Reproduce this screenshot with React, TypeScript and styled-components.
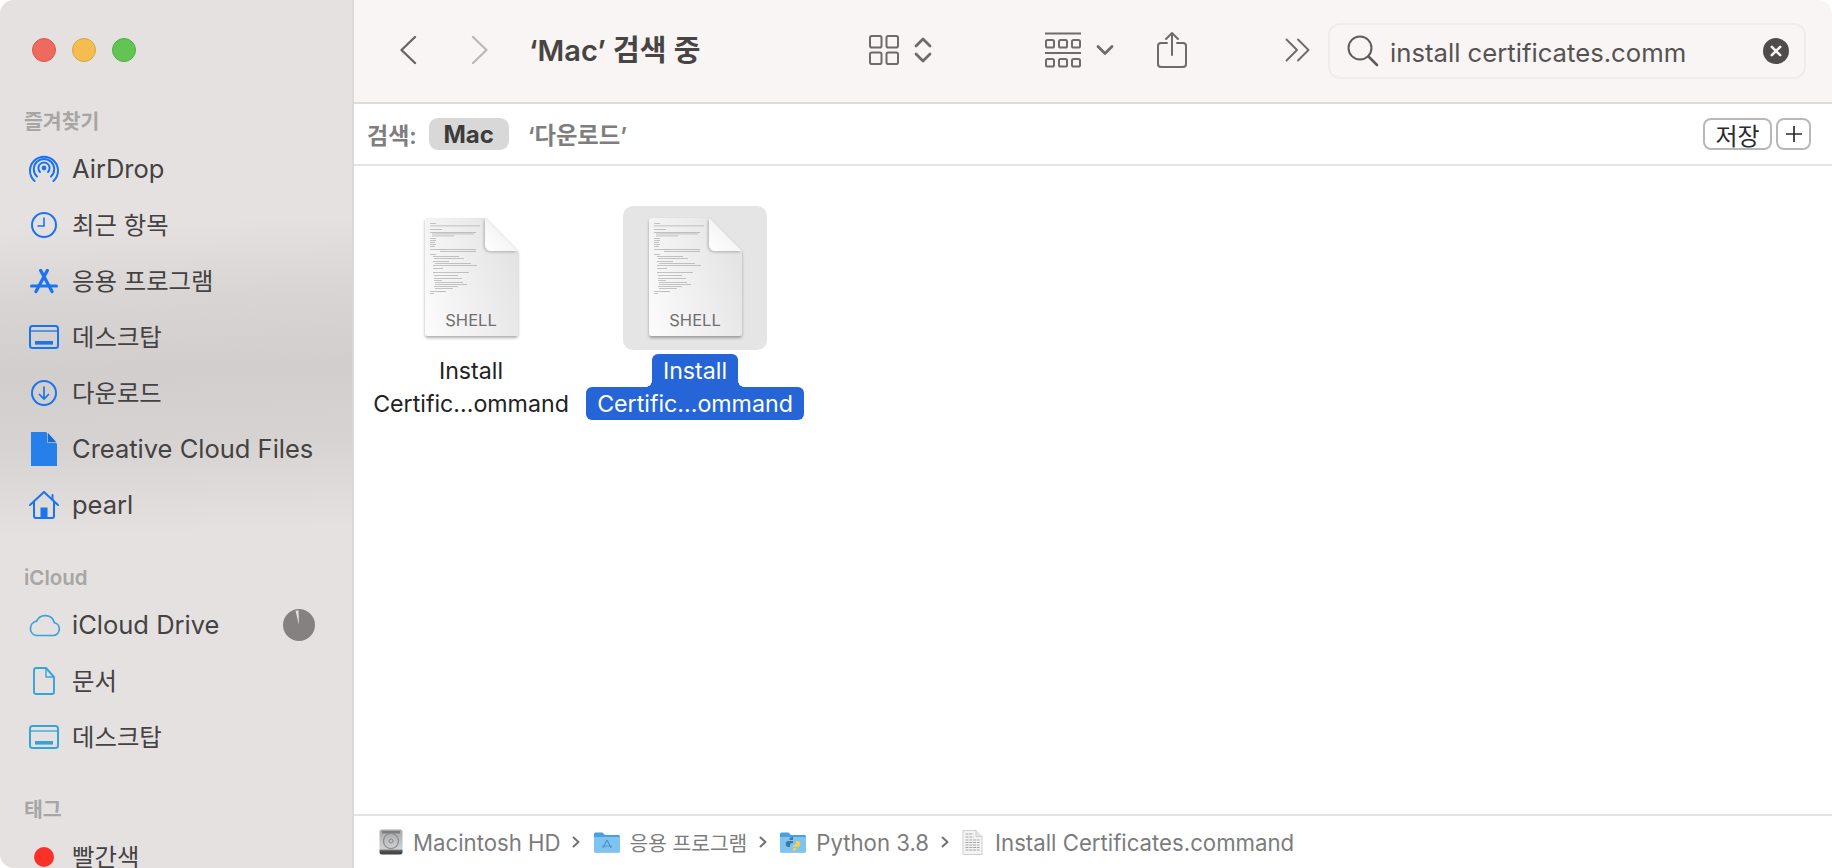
import React from 'react';
import styled, { createGlobalStyle } from 'styled-components';

const FONT = `Inter, "Noto Sans CJK KR", "Noto Sans", sans-serif`;

const Global = createGlobalStyle`
  html, body { margin: 0; padding: 0; height: 100%; background: #fff; overflow: hidden; }
  body { font-family: ${FONT}; -webkit-font-smoothing: antialiased; }
  #root { height: 100%; }
`;

const Window = styled.div`
  width: 1832px;
  height: 868px;
  display: flex;
  overflow: hidden;
  background: #fff;
  border-radius: 14px 14px 0 14px;
`;

const Sidebar = styled.aside`
  width: 352px;
  height: 868px;
  flex: none;
  overflow: hidden;
  border-right: 2px solid #dcd9d8;
  background: linear-gradient(178deg, #e5e1e0 0, #e5e1e0 228px, #d9d5d4 300px, #d2cecd 375px, #d7d3d2 450px, #e5e1e0 540px, #e5e1e0 100%);
`;

const Lights = styled.div`
  display: flex;
  gap: 16px;
  padding: 38px 0 0 32px;
  height: 27px;
`;

const Light = styled.span<{ $fill: string; $edge: string }>`
  width: 24px;
  height: 24px;
  box-sizing: border-box;
  border-radius: 50%;
  background: ${(p) => p.$fill};
  border: 1px solid ${(p) => p.$edge};
`;

const Section = styled.section`
  margin-top: 26px;
  &:first-of-type { margin-top: 38px; }
`;

const SectionTitle = styled.div`
  height: 38px;
  line-height: 38px;
  padding-left: 24px;
  font-size: 20.5px;
  font-weight: 600;
  color: #a8a5a4;
`;

const Row = styled.div`
  height: 56px;
  display: flex;
  align-items: center;
  padding-left: 26px;
  font-size: 25.5px;
  color: #444242;
`;

const RowIcon = styled.span`
  width: 36px;
  height: 36px;
  margin-right: 10px;
  display: flex;
  align-items: center;
  justify-content: center;
  flex: none;
`;

const RowLabel = styled.span<{ $ko?: boolean }>`
  white-space: nowrap;
  font-size: ${(p) => (p.$ko ? '24.4px' : 'inherit')};
  padding-bottom: ${(p) => (p.$ko ? '3px' : '2px')};
`;

const Progress = styled.span`
  margin-left: auto;
  margin-right: 37px;
  width: 32px;
  height: 32px;
  display: flex;
`;

const Main = styled.main`
  flex: 1;
  min-width: 0;
  display: flex;
  flex-direction: column;
`;

const Toolbar = styled.header`
  height: 104px;
  flex: none;
  box-sizing: border-box;
  background: #f9f5f4;
  border-bottom: 2px solid #dfdcdb;
  display: flex;
  align-items: center;
  padding-bottom: 2px;
`;

const ToolIcon = styled.span<{ $w: number; $l: number }>`
  width: ${(p) => p.$w}px;
  margin-left: ${(p) => p.$l}px;
  display: flex;
  flex: none;
  align-items: center;
  justify-content: center;
`;

const Title = styled.h1`
  margin: 0 0 4px 40px;
  width: 200px;
  flex: none;
  font-size: 29px;
  font-weight: 600;
  color: #474544;
  white-space: nowrap;
`;

const Search = styled.div`
  width: 478px;
  height: 56px;
  box-sizing: border-box;
  margin: 2px 0 0 18px;
  border: 2px solid #f0ecea;
  border-radius: 12px;
  display: flex;
  align-items: center;
  padding-left: 17px;
  flex: none;
`;

const SearchText = styled.span`
  margin-left: 11px;
  padding-top: 2px;
  font-size: 25.7px;
  color: #555352;
  white-space: nowrap;
`;

const Clear = styled.span`
  margin-left: auto;
  margin-right: 15px;
  display: flex;
`;

const FilterBar = styled.div`
  height: 62px;
  flex: none;
  box-sizing: border-box;
  border-bottom: 2px solid #e3e3e3;
  display: flex;
  align-items: center;
  padding: 0 21px 0 13px;
`;

const FilterLabel = styled.span`
  font-size: 23px;
  font-weight: 600;
  color: #7e7e7e;
`;

const Pill = styled.span`
  width: 80px;
  height: 32px;
  margin-left: 12px;
  border-radius: 9px;
  background: #d8d8d8;
  display: flex;
  align-items: center;
  justify-content: center;
  font-size: 24px;
  font-weight: 700;
  color: #3c3c3c;
`;

const Scope = styled.span`
  margin-left: 19px;
  font-size: 23.3px;
  font-weight: 600;
  color: #7e7e7e;
`;

const BarButton = styled.button<{ $w: number; $l: string }>`
  width: ${(p) => p.$w}px;
  height: 32px;
  margin-left: ${(p) => p.$l};
  padding: 0;
  box-sizing: border-box;
  background: #fff;
  border: 2px solid #b8b8b8;
  border-radius: 8px;
  display: flex;
  align-items: center;
  justify-content: center;
  font-family: ${FONT};
  font-size: 24px;
  color: #2b2b2b;
`;

const Files = styled.div`
  flex: 1;
  min-height: 0;
  padding: 40px 0 0 5px;
  display: grid;
  grid-template-columns: repeat(auto-fill, 224px);
  align-content: start;
`;

const FileItem = styled.div`
  display: flex;
  flex-direction: column;
  align-items: center;
`;

const Thumb = styled.div<{ $selected?: boolean }>`
  width: 144px;
  height: 144px;
  border-radius: 10px;
  background: ${(p) => (p.$selected ? '#e5e5e5' : 'transparent')};
  display: flex;
  align-items: center;
  justify-content: center;
`;

const FileName = styled.div`
  margin-top: 4px;
  display: flex;
  flex-direction: column;
  align-items: center;
  font-size: 23.2px;
  color: #222;
`;

const NameLine = styled.span<{ $selected?: boolean; $top?: boolean }>`
  position: relative;
  height: 33px;
  line-height: 35px;
  padding: 0 11px;
  white-space: nowrap;
  color: ${(p) => (p.$selected ? '#fff' : '#222')};
  background: ${(p) => (p.$selected ? '#2565d8' : 'transparent')};
  border-radius: ${(p) => (p.$top ? '6px 6px 0 0' : '6px')};
  ${(p) =>
    p.$top && p.$selected
      ? `
    &::before, &::after {
      content: '';
      position: absolute;
      bottom: 0;
      width: 6px;
      height: 6px;
    }
    &::before {
      left: -6px;
      background: radial-gradient(circle at 0 0, transparent 5.6px, #2565d8 6px);
    }
    &::after {
      right: -6px;
      background: radial-gradient(circle at 100% 0, transparent 5.6px, #2565d8 6px);
    }
  `
      : ''}
`;

const StatusBar = styled.footer`
  height: 54px;
  flex: none;
  box-sizing: border-box;
  border-top: 2px solid #e3e3e3;
  display: flex;
  align-items: center;
  padding-left: 25px;
  font-size: 22.2px;
  color: #7c7c7c;
`;

const Crumb = styled.span<{ $ko?: boolean }>`
  display: flex;
  align-items: center;
  gap: 10px;
  white-space: nowrap;
  font-size: ${(p) => (p.$ko ? '20.3px' : 'inherit')};
`;

const CrumbSep = styled.span`
  display: flex;
  margin: 0 13.5px 0 11.5px;
`;

const BLUE = '#1a73f0';
const CYAN = '#36a3d9';
const ICON = '#6f6b6a';

const AirDropIcon = () => (
  <svg width="30" height="28" viewBox="0 0 30 28" fill="none" stroke={BLUE} strokeWidth="2" strokeLinecap="round">
    <circle cx="15" cy="13" r="2.4" fill={BLUE} stroke="none" />
    <path d="M11 17a5.600 5.600 0 1 1 8 0" />
    <path d="M8 21.500a10.200 10.200 0 1 1 14 0" />
    <path d="M5.500 26a14 14 0 1 1 19 0" />
  </svg>
);
const ClockIcon = () => (
  <svg width="28" height="28" viewBox="0 0 28 28" fill="none" stroke={BLUE} strokeWidth="2">
    <circle cx="14" cy="14" r="12" />
    <path d="M14 6.500V15H7.500" strokeWidth="1.600" />
  </svg>
);
const AppsIcon = () => (
  <svg width="28" height="25" viewBox="0 0 28 25" fill="none" stroke={BLUE} strokeLinecap="round">
    <path d="M10.700 1.500L22 22.500M17.300 1.500L6 22.500" strokeWidth="3.300" />
    <path d="M1.500 17h25" strokeWidth="3" />
  </svg>
);
const DesktopIcon = ({ color }: { color: string }) => (
  <svg width="30" height="24" viewBox="0 0 30 24" fill="none">
    <rect x="1" y="1" width="28" height="22" rx="2.500" stroke={color} strokeWidth="2" />
    <path d="M1 6h28" stroke={color} strokeWidth="1.300" />
    <rect x="6" y="16" width="18" height="3.600" fill={color} />
  </svg>
);
const DownloadIcon = () => (
  <svg width="28" height="28" viewBox="0 0 28 28" fill="none" stroke={BLUE} strokeWidth="2">
    <circle cx="14" cy="14" r="12" />
    <path d="M14 7.500V19.500M9 15l5 5 5-5" strokeWidth="1.700" />
  </svg>
);
const CloudFileIcon = () => (
  <svg width="28" height="36" viewBox="0 0 28 36" fill="none">
    <path d="M1 1h15l11 12v22H1z" fill="#2680eb" />
    <path d="M17.500 1L27 11.500H17.500z" fill="#1b6bd0" stroke="#e0dcdb" strokeWidth="0.6" />
  </svg>
);
const HomeIcon = () => (
  <svg width="30" height="28" viewBox="0 0 30 28" fill="none" stroke={BLUE} strokeWidth="2" strokeLinejoin="round" strokeLinecap="round">
    <path d="M1 14L15 1l14 13" />
    <path d="M5 11v14a2 2 0 0 0 2 2h16a2 2 0 0 0 2-2V11" />
    <path d="M23.500 4v5" />
    <rect x="11.500" y="16.500" width="7" height="10.500" fill={BLUE} stroke="none" />
  </svg>
);
const CloudIcon = () => (
  <svg width="33" height="24" viewBox="0 0 33 24" fill="none" stroke={CYAN} strokeWidth="1.700">
    <path d="M8 22.500h17a6.500 6.500 0 0 0 1.400-12.800A9.500 9.500 0 0 0 8.600 8.200 7.300 7.300 0 0 0 8 22.500z" />
  </svg>
);
const DocOutlineIcon = () => (
  <svg width="22" height="28" viewBox="0 0 22 28" fill="none" stroke={CYAN} strokeWidth="1.900" strokeLinejoin="round">
    <path d="M3 1h10l8 9v15a2 2 0 0 1-2 2H3a2 2 0 0 1-2-2V3a2 2 0 0 1 2-2z" />
    <path d="M13 1v9h8" strokeWidth="1.400" />
  </svg>
);
const TagDot = () => (
  <svg width="20" height="20" viewBox="0 0 20 20">
    <circle cx="10" cy="10" r="10" fill="#fb3128" />
  </svg>
);
const ProgressPie = () => (
  <svg width="32" height="32" viewBox="0 0 32 32">
    <circle cx="16" cy="16" r="16" fill="#858180" />
    <path d="M16 16L12.500 1.800A15 15 0 0 1 15.500 1.200z" fill="#e5e1e0" />
  </svg>
);

const Chevron = ({ dir, color }: { dir: 'l' | 'r'; color: string }) => (
  <svg width="18" height="30" viewBox="0 0 18 30" fill="none" stroke={color} strokeWidth="2.400" strokeLinecap="round" strokeLinejoin="round">
    <path d={dir === 'l' ? 'M16 2L2.500 15 16 28' : 'M2 2l13.500 13L2 28'} />
  </svg>
);
const GridIcon = () => (
  <svg width="32" height="32" viewBox="0 0 32 32" fill="none" stroke={ICON} strokeWidth="2">
    <rect x="2" y="2" width="11.500" height="11.500" rx="1.800" />
    <rect x="18.500" y="2" width="11.500" height="11.500" rx="1.800" />
    <rect x="2" y="18.500" width="11.500" height="11.500" rx="1.800" />
    <rect x="18.500" y="18.500" width="11.500" height="11.500" rx="1.800" />
  </svg>
);
const UpDownIcon = () => (
  <svg width="18" height="28" viewBox="0 0 18 28" fill="none" stroke={ICON} strokeWidth="2.800" strokeLinecap="round" strokeLinejoin="round">
    <path d="M2 10l7-7 7 7M2 18l7 7 7-7" />
  </svg>
);
const GroupIcon = () => (
  <svg width="36" height="36" viewBox="0 0 36 36" fill="none" stroke={ICON} strokeWidth="2">
    <path d="M0 1.500h36M0 21h36" />
    <rect x="1" y="8" width="8" height="7.500" rx="1.600" />
    <rect x="14" y="8" width="8" height="7.500" rx="1.600" />
    <rect x="27" y="8" width="8" height="7.500" rx="1.600" />
    <rect x="1" y="27" width="8" height="7.500" rx="1.600" />
    <rect x="14" y="27" width="8" height="7.500" rx="1.600" />
    <rect x="27" y="27" width="8" height="7.500" rx="1.600" />
  </svg>
);
const DownIcon = () => (
  <svg width="18" height="12" viewBox="0 0 18 12" fill="none" stroke={ICON} strokeWidth="2.800" strokeLinecap="round" strokeLinejoin="round">
    <path d="M2 2.500l7 7 7-7" />
  </svg>
);
const ShareIcon = () => (
  <svg width="30" height="38" viewBox="0 0 30 38" fill="none" stroke={ICON} strokeWidth="2" strokeLinecap="round" strokeLinejoin="round">
    <path d="M10 12H4a3 3 0 0 0-3 3v18a3 3 0 0 0 3 3h22a3 3 0 0 0 3-3V15a3 3 0 0 0-3-3h-6" />
    <path d="M15 24V2M9 8l6-6 6 6" />
  </svg>
);
const MoreIcon = () => (
  <svg width="25" height="24" viewBox="0 0 25 24" fill="none" stroke={ICON} strokeWidth="1.900" strokeLinecap="round" strokeLinejoin="round">
    <path d="M1.500 1.500L12 12 1.500 22.500M13 1.500L23.500 12 13 22.500" />
  </svg>
);
const SearchIcon = () => (
  <svg width="32" height="32" viewBox="0 0 32 32" fill="none" stroke="#5e5b5a" strokeWidth="2" strokeLinecap="round">
    <circle cx="13" cy="13" r="11.500" />
    <path d="M21.500 21.500L30 30" strokeWidth="2.600" />
  </svg>
);
const ClearIcon = () => (
  <svg width="26" height="26" viewBox="0 0 26 26" fill="none">
    <circle cx="13" cy="13" r="13" fill="#4f4d4c" />
    <path d="M8.800 8.800l8.400 8.400M17.200 8.800l-8.400 8.400" stroke="#f9f5f4" strokeWidth="2.600" strokeLinecap="round" />
  </svg>
);
const PlusIcon = () => (
  <svg width="18" height="18" viewBox="0 0 18 18" fill="none" stroke="#2b2b2b" strokeWidth="1.700">
    <path d="M9 1v16M1 9h16" />
  </svg>
);

const DOC_LINES: [number, number, number][] = [
  [6, 5, 6], [6, 7.5, 50], [6, 11, 12], [6, 14, 46], [8, 15.5, 42], [8, 17.5, 22], [6, 20, 6], [6, 22, 6],
  [6, 24, 5], [6, 26, 6], [6, 28, 5], [6, 31, 16], [16, 31, 36], [16, 33, 36], [6, 36, 6], [9, 38, 26],
  [10, 40, 30], [9, 43, 16], [11, 45, 36], [9, 47, 44], [9, 50, 10], [9, 54, 36], [10, 57, 24], [10, 60, 28],
  [10, 62, 8], [11, 64, 28], [11, 66, 32], [10, 68, 24], [11, 70, 18], [6, 73, 14], [14, 73, 8], [6, 75, 4],
];

const DocIcon = ({ id }: { id: string }) => (
  <svg width="104" height="130" viewBox="0 0 104 130" fill="none">
    <defs>
      <linearGradient id={`${id}Body`} x1="1" y1="0.45" x2="0" y2="0.85">
        <stop offset="0" stopColor="#e4e4e4" />
        <stop offset="1" stopColor="#fbfbfb" />
      </linearGradient>
      <linearGradient id={`${id}Fold`} x1="0" y1="1" x2="0.9" y2="0.1">
        <stop offset="0" stopColor="#ffffff" />
        <stop offset="0.5" stopColor="#f6f6f6" />
        <stop offset="1" stopColor="#dcdcdc" />
      </linearGradient>
      <filter id={`${id}Shadow`} x="-10%" y="-10%" width="120%" height="120%">
        <feDropShadow dx="0" dy="2" stdDeviation="1.500" floodColor="#000" floodOpacity="0.32" />
      </filter>
      <filter id={`${id}FoldShadow`} x="-30%" y="-30%" width="160%" height="160%">
        <feDropShadow dx="-1" dy="1" stdDeviation="1.500" floodColor="#000" floodOpacity="0.25" />
      </filter>
    </defs>
    <path
      d="M8 5h59l32 33v82a3 3 0 0 1-3 3H9a3 3 0 0 1-3-3V7a2 2 0 0 1 2-2z"
      fill={`url(#${id}Body)`}
      filter={`url(#${id}Shadow)`}
    />
    <g fill="#8d8d8d" opacity="0.6">
      {DOC_LINES.map(([x, y, w], i) => (
        <rect key={i} x={x + 5} y={y + 5} width={w} height="0.8" />
      ))}
    </g>
    <path d="M66 5v27a6 6 0 0 0 6 6h27z" fill={`url(#${id}Fold)`} filter={`url(#${id}FoldShadow)`} />
    <text x="52" y="113" textAnchor="middle" fontFamily={FONT} fontSize="16.500" fill="#6f6f6f">
      SHELL
    </text>
  </svg>
);

const DriveIcon = () => (
  <svg width="24" height="26" viewBox="0 0 24 26">
    <defs>
      <linearGradient id="drv" x1="0" y1="0" x2="0" y2="1">
        <stop offset="0" stopColor="#a6a8a8" />
        <stop offset="0.78" stopColor="#cfd2d2" />
        <stop offset="0.85" stopColor="#555" />
        <stop offset="1" stopColor="#3c3c3c" />
      </linearGradient>
    </defs>
    <rect x="0.500" y="0.500" width="23" height="25" rx="2.500" fill="url(#drv)" />
    <rect x="3" y="2" width="18" height="2.500" fill="#7d7f7f" />
    <circle cx="12" cy="12" r="7.500" fill="none" stroke="#8a8c8c" strokeWidth="1.200" />
    <circle cx="12" cy="12" r="2" fill="none" stroke="#8a8c8c" />
  </svg>
);
const FolderIcon = ({ children }: { children?: React.ReactNode }) => (
  <svg width="26" height="21" viewBox="0 0 26 21">
    <path d="M0 2A1.500 1.500 0 0 1 1.500 0.500h7L11 3h13.500A1.500 1.500 0 0 1 26 4.500V19a1.500 1.500 0 0 1-1.500 1.500h-23A1.500 1.500 0 0 1 0 19z" fill="#4a9fe0" />
    <path d="M0 5h26v14a1.500 1.500 0 0 1-1.500 1.500h-23A1.500 1.500 0 0 1 0 19z" fill="#7fc4f0" />
    {children}
  </svg>
);
const TinyDoc = () => (
  <svg width="23" height="25" viewBox="0 0 23 25" fill="none">
    <path d="M1 0.500h13l6 6V24.500H1z" fill="#f4f4f4" stroke="#cfcfcf" />
    <path d="M14 0.500v6h6" fill="#e4e4e4" stroke="#cfcfcf" />
    <path d="M3.500 4h8M3.500 7h8M3.500 10h14M3.500 12.500h14M3.500 15h14M3.500 17.500h14M3.500 20h14" stroke="#a5a5a5" strokeWidth="1" strokeDasharray="3 0.800" />
  </svg>
);
const Sep = () => (
  <CrumbSep>
    <svg width="8" height="12" viewBox="0 0 8 12" fill="none" stroke="#6f6f6f" strokeWidth="1.900" strokeLinecap="round" strokeLinejoin="round">
      <path d="M1.500 1.500L6.500 6l-5 4.500" />
    </svg>
  </CrumbSep>
);

const File = ({ selected, id }: { selected?: boolean; id: string }) => (
  <FileItem>
    <Thumb $selected={selected}>
      <DocIcon id={id} />
    </Thumb>
    <FileName>
      <NameLine $selected={selected} $top>Install</NameLine>
      <NameLine $selected={selected}>Certific...ommand</NameLine>
    </FileName>
  </FileItem>
);

export default function App() {
  return (
    <>
      <Global />
      <Window>
        <Sidebar>
          <Lights>
            <Light $fill="#ee6a5f" $edge="#d9584e" />
            <Light $fill="#f5bd4f" $edge="#d9a23e" />
            <Light $fill="#61c454" $edge="#52ad46" />
          </Lights>
          <Section>
            <SectionTitle>즐겨찾기</SectionTitle>
            <Row><RowIcon><AirDropIcon /></RowIcon><RowLabel>AirDrop</RowLabel></Row>
            <Row><RowIcon><ClockIcon /></RowIcon><RowLabel $ko>최근 항목</RowLabel></Row>
            <Row><RowIcon><AppsIcon /></RowIcon><RowLabel $ko>응용 프로그램</RowLabel></Row>
            <Row><RowIcon><DesktopIcon color={BLUE} /></RowIcon><RowLabel $ko>데스크탑</RowLabel></Row>
            <Row><RowIcon><DownloadIcon /></RowIcon><RowLabel $ko>다운로드</RowLabel></Row>
            <Row><RowIcon><CloudFileIcon /></RowIcon><RowLabel>Creative Cloud Files</RowLabel></Row>
            <Row><RowIcon><HomeIcon /></RowIcon><RowLabel>pearl</RowLabel></Row>
          </Section>
          <Section>
            <SectionTitle>iCloud</SectionTitle>
            <Row>
              <RowIcon><CloudIcon /></RowIcon>
              <RowLabel>iCloud Drive</RowLabel>
              <Progress><ProgressPie /></Progress>
            </Row>
            <Row><RowIcon><DocOutlineIcon /></RowIcon><RowLabel $ko>문서</RowLabel></Row>
            <Row><RowIcon><DesktopIcon color={CYAN} /></RowIcon><RowLabel $ko>데스크탑</RowLabel></Row>
          </Section>
          <Section>
            <SectionTitle>태그</SectionTitle>
            <Row><RowIcon><TagDot /></RowIcon><RowLabel $ko>빨간색</RowLabel></Row>
          </Section>
        </Sidebar>
        <Main>
          <Toolbar>
            <ToolIcon $w={18} $l={45}><Chevron dir="l" color="#6a6665" /></ToolIcon>
            <ToolIcon $w={18} $l={54}><Chevron dir="r" color="#bdb9b8" /></ToolIcon>
            <Title>‘Mac’ 검색 중</Title>
            <ToolIcon $w={32} $l={139}><GridIcon /></ToolIcon>
            <ToolIcon $w={18} $l={14}><UpDownIcon /></ToolIcon>
            <ToolIcon $w={36} $l={113}><GroupIcon /></ToolIcon>
            <ToolIcon $w={18} $l={15}><DownIcon /></ToolIcon>
            <ToolIcon $w={30} $l={43}><ShareIcon /></ToolIcon>
            <ToolIcon $w={25} $l={98}><MoreIcon /></ToolIcon>
            <Search>
              <SearchIcon />
              <SearchText>install certificates.comm</SearchText>
              <Clear><ClearIcon /></Clear>
            </Search>
          </Toolbar>
          <FilterBar>
            <FilterLabel>검색:</FilterLabel>
            <Pill>Mac</Pill>
            <Scope>‘다운로드’</Scope>
            <BarButton $w={69} $l="auto">저장</BarButton>
            <BarButton $w={35} $l="4px"><PlusIcon /></BarButton>
          </FilterBar>
          <Files>
            <File id="docA" />
            <File id="docB" selected />
          </Files>
          <StatusBar>
            <Crumb><DriveIcon />Macintosh HD</Crumb>
            <Sep />
            <Crumb $ko><FolderIcon><path d="M13 8l-4 8M13 8l4 8M8 14h10" stroke="#4e94cf" strokeWidth="1.200" fill="none" /></FolderIcon>응용 프로그램</Crumb>
            <Sep />
            <Crumb>
              <FolderIcon>
                <path d="M13 5c-3 0-3.500 1.200-3.500 3h3.500v1H8.500c-1.800 0-2.800 1.300-2.800 3s1 3 2.500 3H10v-2c0-1.300 1-2 3-2z" fill="#3f77a8" />
                <path d="M13 19c3 0 3.500-1.200 3.500-3H13v-1h4.500c1.800 0 2.800-1.300 2.800-3s-1-3-2.500-3H16v2c0 1.300-1 2-3 2z" fill="#f4cf4a" />
              </FolderIcon>
              Python 3.8
            </Crumb>
            <Sep />
            <Crumb><TinyDoc />Install Certificates.command</Crumb>
          </StatusBar>
        </Main>
      </Window>
    </>
  );
}
